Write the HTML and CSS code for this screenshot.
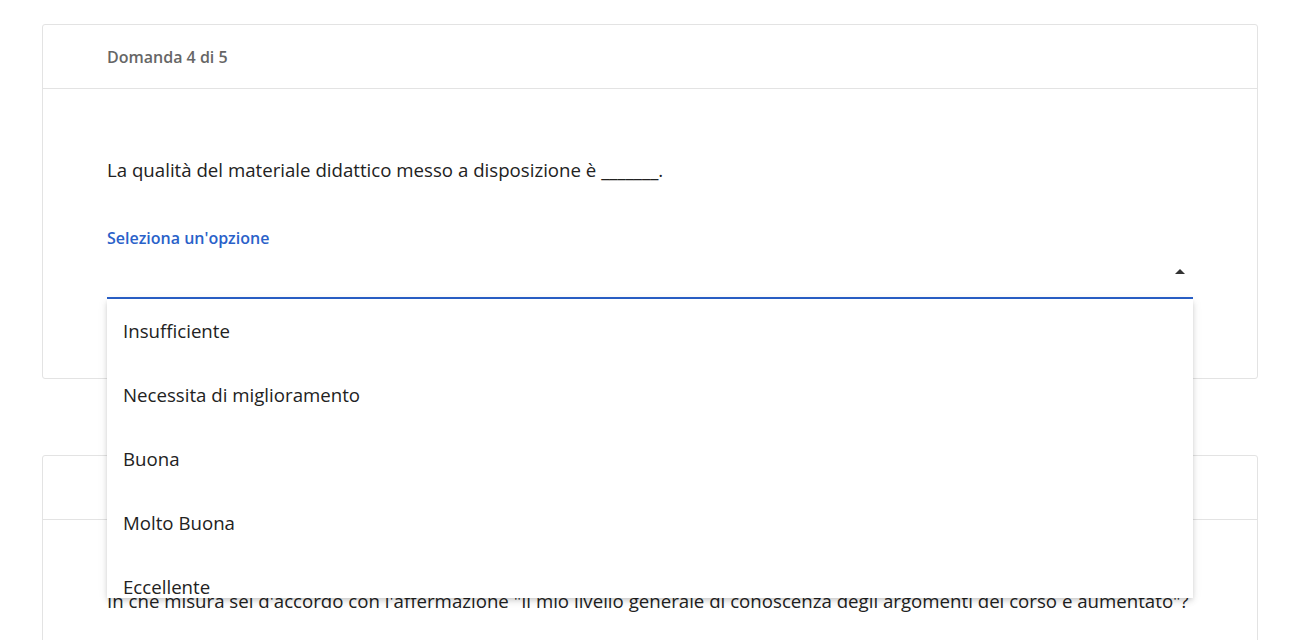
FILE: index.html
```html
<!DOCTYPE html>
<html lang="it">
<head>
<meta charset="utf-8">
<title>Questionario</title>
<link rel="stylesheet" href="styles.css">
</head>
<body>
<div class="page">
  <section class="card">
    <header class="card-head">Domanda 4 di 5</header>
    <div class="card-body">
      <p class="question">La qualità del materiale didattico messo a disposizione è _______.</p>
      <div class="field">
        <label class="field-label">Seleziona un'opzione</label>
        <div class="select">
          <span class="arrow"></span>
        </div>
        <ul class="menu">
          <li>Insufficiente</li>
          <li>Necessita di miglioramento</li>
          <li>Buona</li>
          <li>Molto Buona</li>
          <li>Eccellente</li>
        </ul>
      </div>
    </div>
  </section>
  <section class="card">
    <header class="card-head">Domanda 5 di 5</header>
    <div class="card-body">
      <p class="question">In che misura sei d'accordo con l'affermazione "Il mio livello generale di conoscenza degli argomenti del corso è aumentato"?</p>
    </div>
  </section>
</div>
</body>
</html>
```
FILE: styles.css
```css
* { box-sizing: border-box; }
html, body { margin: 0; padding: 0; background: #fff; }
body {
  font-family: "Open Sans", "Noto Sans", sans-serif;
  color: #222;
  overflow: hidden;
  height: 640px;
}
.page {
  padding: 24px 44px 0 42px;
  display: flex;
  flex-direction: column;
  gap: 76px;
}
.card {
  border: 1px solid #e3e3e3;
  border-radius: 3px;
  background: #fff;
}
.card-head {
  height: 64px;
  border-bottom: 1px solid #e3e3e3;
  padding-left: 64px;
  display: flex;
  align-items: center;
  font-size: 16px;
  font-weight: 600;
  color: #666;
}
.card-body {
  padding: 67px 64px 79px 64px;
}
.question {
  margin: 0;
  font-size: 18.67px;
  line-height: 28px;
  color: #222;
  white-space: nowrap;
}
.field {
  position: relative;
  margin-top: 43px;
}
.field-label {
  display: block;
  font-size: 16px;
  font-weight: 600;
  line-height: 22px;
  color: #2a61c9;
}
.select {
  position: relative;
  height: 50px;
  border-bottom: 2px solid #2a61c9;
}
.arrow {
  position: absolute;
  right: 8px;
  top: 20px;
  width: 0;
  height: 0;
  border-left: 5px solid transparent;
  border-right: 5px solid transparent;
  border-bottom: 5px solid #333;
}
.menu {
  position: absolute;
  left: 0;
  right: 0;
  top: 72px;
  height: 299px;
  overflow: hidden;
  margin: 0;
  padding: 0;
  list-style: none;
  background: #fff;
  box-shadow: 0 2px 4px -1px rgba(0,0,0,.12), 0 4px 6px 0 rgba(0,0,0,.08), 0 1px 10px 0 rgba(0,0,0,.08);
  z-index: 5;
}
.menu li {
  height: 64px;
  display: flex;
  align-items: center;
  padding: 0 0 2px 16px;
  font-size: 18.67px;
  color: #222;
}
```
